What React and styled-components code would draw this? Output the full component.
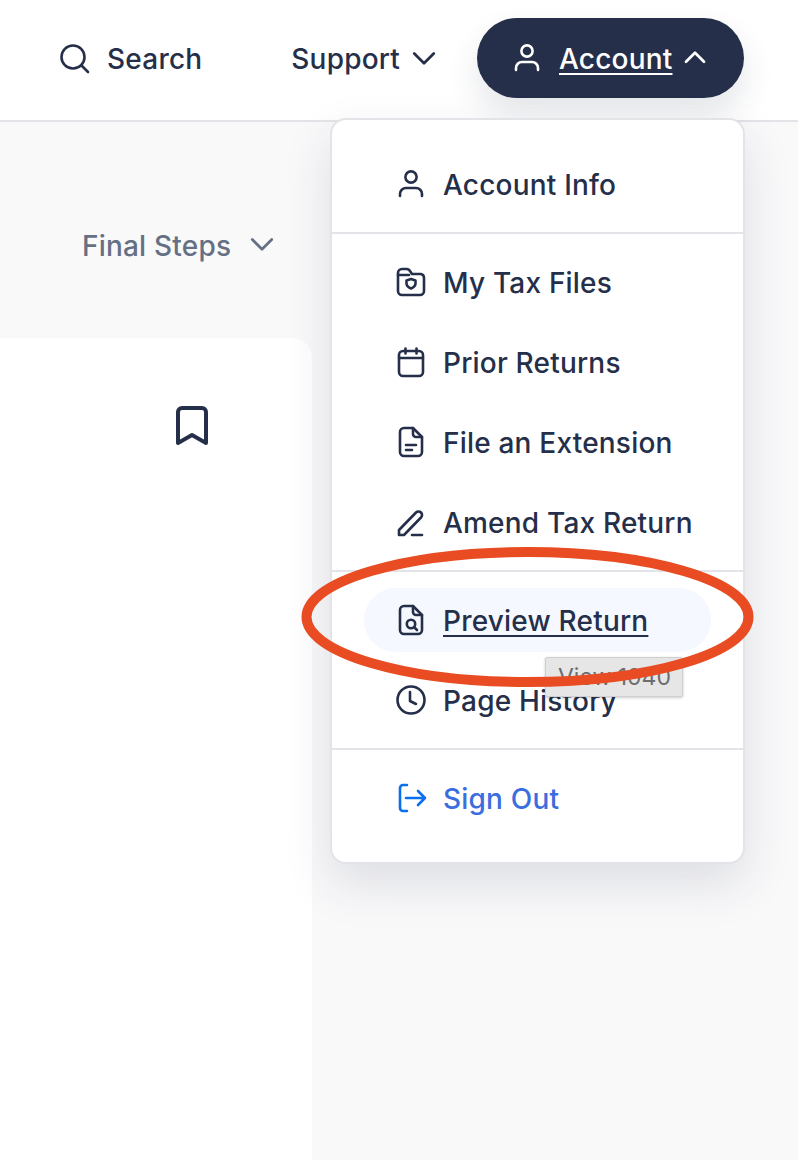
import React from 'react';
import styled, { createGlobalStyle } from 'styled-components';

const GlobalStyle = createGlobalStyle`
  html, body {
    margin: 0;
    padding: 0;
    background: #f9f9fa;
  }
  * {
    box-sizing: border-box;
  }
`

const navy = '#252f4a';

const Page = styled.div`
  position: relative;
  width: 798px;
  height: 1160px;
  overflow: hidden;
  background: #f9f9fa;
  font-family: "Inter", "Noto Sans", sans-serif;
  font-size: 28px;
  letter-spacing: 0.2px;
  font-weight: 500;
  color: ${navy};
`
const Header = styled.header`
  height: 122px;
  background: #fff;
  border-bottom: 2px solid #e3e3e8;
  display: flex;
  align-items: flex-start;
  justify-content: flex-end;
  padding: 18px 54px 0 0;
`
const NavItem = styled.div`
  height: 80px;
  display: flex;
  align-items: center;
  gap: ${({ $gap }) => $gap || 17}px;
  margin-right: ${({ $space }) => $space || 0}px;
`
const Label = styled.span`
  padding-top: 2px;
  text-decoration: ${({ $active }) => ($active ? 'underline' : 'none')};
  text-underline-offset: 4px;
  text-decoration-thickness: 2px;
`
const AccountButton = styled.div`
  width: 267px;
  height: 80px;
  border-radius: 40px;
  background: ${navy};
  color: #fff;
  display: flex;
  align-items: center;
  padding-left: 34px;
  box-shadow: 0 16px 32px rgba(37, 47, 74, 0.12);
  position: relative;
  z-index: 1;
`
const AccountLabel = styled(Label)`
  margin: 0 11px 0 16px;
`
const Stepper = styled.div`
  height: 216px;
  width: 312px;
  display: flex;
  align-items: flex-start;
  padding: 105px 0 0 82px;
  gap: 19px;
  color: #667085;
  svg {
    margin-top: 5px;
  }
`
const Card = styled.section`
  width: 312px;
  height: 822px;
  background: #fff;
  border-radius: 0 20px 0 0;
  padding: 67px 0 0 174px;
`
const Menu = styled.nav`
  position: absolute;
  left: 330px;
  top: 118px;
  width: 415px;
  height: 746px;
  background: #fff;
  border: 2px solid #e3e3e8;
  border-radius: 16px;
  box-shadow: 0 20px 48px rgba(37, 47, 74, 0.13);
  z-index: 2;
`
const Section = styled.div`
  display: flex;
  flex-direction: column;
  gap: 16px;
  padding: ${({ $top }) => $top || 16}px 32px ${({ $bottom }) => $bottom || 16}px;
  & + & {
    border-top: 2px solid #e3e3e8;
  }
`
const Row = styled.div`
  height: 64px;
  padding-left: 31px;
  display: flex;
  align-items: center;
  gap: 16px;
  border-radius: 32px;
  color: ${({ $link }) => ($link ? '#3a6ee0' : navy)};
  background: ${({ $active }) => ($active ? '#f5f8fe' : 'transparent')};
`
const Tooltip = styled.div`
  position: absolute;
  left: 545px;
  top: 657px;
  width: 138px;
  height: 40px;
  background: #e6e6e7;
  border: 1px solid #cfcfd1;
  box-shadow: 0 1px 3px rgba(0, 0, 0, 0.2);
  border-radius: 2px;
  color: #6d6d6f;
  font-size: 23px;
  letter-spacing: 0;
  font-weight: 400;
  line-height: 38px;
  padding-left: 12px;
  z-index: 3;
`
const Annotation = styled.svg`
  position: absolute;
  left: 295px;
  top: 540px;
  z-index: 4;
`
const Glyph = styled.svg`
  display: block;
  flex: none;
  fill: none;
  stroke: ${({ $stroke }) => $stroke || 'currentColor'};
  stroke-width: ${({ $weight }) => $weight || 2.6};
  stroke-linecap: round;
  stroke-linejoin: round;
`

const Icon = ({ children, size = 32, stroke, weight }) => (
  <Glyph width={size} height={size} viewBox="0 0 32 32" $stroke={stroke} $weight={weight}>
    {children}
  </Glyph>
);

const UserIcon = () => (
  <Icon>
    <circle cx="16" cy="9" r="5.6" />
    <path d="M5 28v-2a6 6 0 0 1 6-6h10a6 6 0 0 1 6 6v2" />
  </Icon>
);
const SearchIcon = () => (
  <Icon>
    <circle cx="15" cy="15" r="11.5" />
    <path d="M23.5 23.5L30 30" />
  </Icon>
);
const Chevron = ({ up }) => (
  <Icon size={24} weight={3.6}>
    <path d={up ? 'M4 21L16 9l12 12' : 'M3 10l13 13 13-13'} />
  </Icon>
);
const FolderIcon = () => (
  <Icon>
    <path d="M3 7a4 4 0 0 1 4-4h5a4 4 0 0 1 3 2l2 3h9a4 4 0 0 1 3 4v13a4 4 0 0 1-4 4H7a4 4 0 0 1-4-4z" />
    <path d="M3 9h11" />
    <path d="M16 13l4.5 1.5v3c0 2.5-2 4-4.5 5-2.5-1-4.5-2.5-4.5-5v-3z" />
  </Icon>
);
const CalendarIcon = () => (
  <Icon>
    <rect x="4" y="5" width="24" height="25" rx="4" />
    <path d="M4 12h24M10.5 2.5v5M21.5 2.5v5" />
  </Icon>
);
const filePath = 'M5 6a4 4 0 0 1 4-4h9l9 9v15a4 4 0 0 1-4 4H9a4 4 0 0 1-4-4z';
const FileIcon = () => (
  <Icon>
    <path d={filePath} />
    <path d="M18 2v6a3 3 0 0 0 3 3h6M11 19h10M11 24h6" />
  </Icon>
);
const PenIcon = () => (
  <Icon>
    <path d="M4 29v-5L21 6.5a3.5 3.5 0 0 1 5 5L9 29z" />
    <path d="M17 29h10" />
  </Icon>
);
const FileSearchIcon = () => (
  <Icon>
    <path d={filePath} />
    <path d="M18 2v6a3 3 0 0 0 3 3h6" />
    <circle cx="16" cy="20" r="4.2" />
    <path d="M19.2 23.2l2.8 2.8" />
  </Icon>
);
const ClockIcon = () => (
  <Icon>
    <circle cx="16" cy="16" r="13.5" />
    <path d="M15 8v9l6 3" />
  </Icon>
);
const SignOutIcon = () => (
  <Icon stroke="#0a6fef">
    <path d="M12 3H8a3 3 0 0 0-3 3v20a3 3 0 0 0 3 3h4" />
    <path d="M11 16h19M23 9l7 7-7 7" />
  </Icon>
);
const BookmarkIcon = () => (
  <Glyph width="36" height="42" viewBox="0 0 36 42" $weight={4}>
    <path d="M4 38V7a4 4 0 0 1 4-4h20a4 4 0 0 1 4 4v31l-14-8z" />
  </Glyph>
);

const App = () => {
  return (
    <Page>
      <GlobalStyle />
      <Header>
        <NavItem $space={89}>
          <SearchIcon />
          <Label>Search</Label>
        </NavItem>
        <NavItem $space={41} $gap={12}>
          <Label>Support</Label>
          <Chevron />
        </NavItem>
        <AccountButton>
          <UserIcon />
          <AccountLabel $active>Account</AccountLabel>
          <Chevron up />
        </AccountButton>
      </Header>
      <Stepper>
        <Label>Final Steps</Label>
        <Chevron />
      </Stepper>
      <Card>
        <BookmarkIcon />
      </Card>
      <Menu>
        <Section $top={32}>
          <Row><UserIcon /><Label>Account Info</Label></Row>
        </Section>
        <Section>
          <Row><FolderIcon /><Label>My Tax Files</Label></Row>
          <Row><CalendarIcon /><Label>Prior Returns</Label></Row>
          <Row><FileIcon /><Label>File an Extension</Label></Row>
          <Row><PenIcon /><Label>Amend Tax Return</Label></Row>
        </Section>
        <Section>
          <Row $active><FileSearchIcon /><Label $active>Preview Return</Label></Row>
          <Row><ClockIcon /><Label>Page History</Label></Row>
        </Section>
        <Section $bottom={32}>
          <Row $link><SignOutIcon /><Label>Sign Out</Label></Row>
        </Section>
      </Menu>
      <Tooltip>View 1040</Tooltip>
      <Annotation width="470" height="160" viewBox="0 0 470 160">
        <ellipse cx="232.5" cy="77" rx="221" ry="65" fill="none" stroke="#e94b22" strokeWidth="10" />
      </Annotation>
    </Page>
  );
}

export default App;
